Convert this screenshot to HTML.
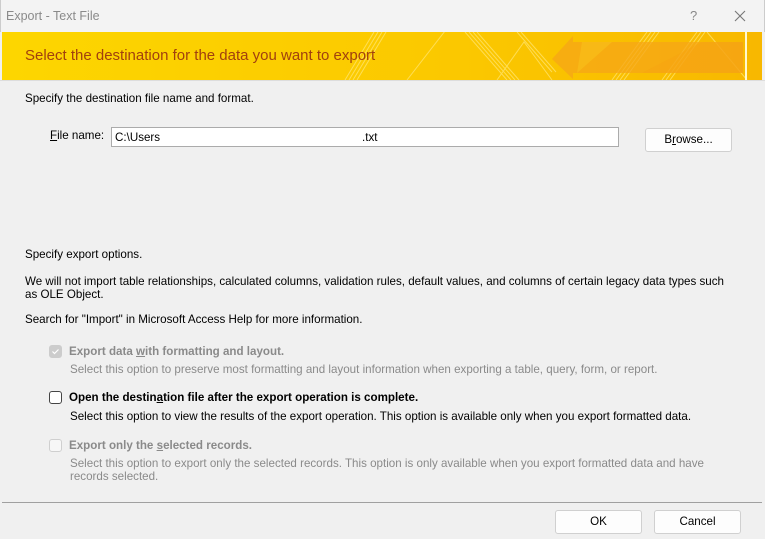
<!DOCTYPE html>
<html><head><style>
*{margin:0;padding:0;box-sizing:border-box}
body{width:765px;height:539px;background:#f0f0f0;font-family:"Liberation Sans",sans-serif;font-size:11.6px;color:#000;position:relative;overflow:hidden}
.a{position:absolute;white-space:nowrap}
.g{color:#8a8a8a}
.btn{position:absolute;background:#fdfdfd;border:1px solid #d0d0d0;border-radius:3px;text-align:center;font-size:11.6px}
.cb{position:absolute;width:13px;height:13px;border:1px solid #cfcfcf;border-radius:3px;background:#f7f7f7}
</style></head><body>
<div class="a" style="left:0;top:0;width:765px;height:32px;background:#f3f3f3;border-left:1px solid #ccc;border-right:1px solid #ccc"></div>
<div class="a" style="left:6px;top:9px;font-size:12.5px;color:#8a8a8a">Export - Text File</div>
<div class="a" style="left:690px;top:8px;font-size:13px;color:#888">?</div>
<svg class="a" style="left:734px;top:10px" width="12" height="12"><path d="M1 1L11 11M11 1L1 11" stroke="#777" stroke-width="1.1"/></svg>
<div class="a" style="left:2px;top:32px;width:760px;height:48px;background:linear-gradient(90deg,#fdd600,#fbc800 60%,#f8b800);overflow:hidden">
<svg width="760" height="48" style="position:absolute;left:0;top:0">
<g stroke="#ffe36a" stroke-width="1" fill="none" opacity=".8">
<path d="M343 48L372 0M347 48L376 0M351 48L380 0M355 48L384 0"/>
<path d="M405 48L450 -10"/>
<path d="M463 0L505 48M467 0L509 48M471 0L513 48M475 0L517 48"/>
<path d="M495 48L522 10L550 48"/>
<path d="M515 0L550 40M519 0L554 40"/>
<path d="M610 48L645 0M614 48L649 0M618 48L653 0M622 48L657 0"/>
<path d="M660 48L695 0M664 48L699 0M668 48L703 0"/>
<path d="M705 0L745 48"/>
</g>
<path d="M550 27L571 4L571 10L741 10L741 41L571 41L571 47Z" fill="#f6a517" opacity=".75"/>
<path d="M580 10L610 10L575 41L575 41Z" fill="#f9c21a" opacity=".6"/>
<path d="M640 41L700 10L741 10L741 41Z" fill="#f5a010" opacity=".35"/>
<rect x="743" y="0" width="2" height="48" fill="#fff8d0"/>
</svg>
</div>
<div class="a" style="left:25px;top:47px;font-size:15px;color:#a1400e">Select the destination for the data you want to export</div>
<div class="a" style="left:0;top:80px;width:765px;height:1px;background:#ddd"></div>
<div class="a" style="left:25px;top:92px">Specify the destination file name and format.</div>
<div class="a" style="left:50px;top:129px"><u>F</u>ile name:</div>
<div class="a" style="left:111px;top:127px;width:508px;height:20px;background:#fff;border:1px solid #ababab"></div>
<div class="a" style="left:115px;top:131px">C:\Users</div>
<div class="a" style="left:362px;top:131px">.txt</div>
<div class="btn" style="left:645px;top:128px;width:87px;height:24px;line-height:22px">B<u>r</u>owse...</div>
<div class="a" style="left:25px;top:248px">Specify export options.</div>
<div class="a" style="left:25px;top:275px;line-height:13px">We will not import table relationships, calculated columns, validation rules, default values, and columns of certain legacy data types such<br>as OLE Object.</div>
<div class="a" style="left:25px;top:313px">Search for "Import" in Microsoft Access Help for more information.</div>
<div class="cb" style="left:49px;top:345px;background:#ccc;border-color:#ccc"><svg width="11" height="11" style="position:absolute;left:0;top:0"><path d="M2.5 5.5L4.5 7.5L8.5 3.5" stroke="#fff" stroke-width="1.2" fill="none"/></svg></div>
<div class="a g" style="left:69px;top:345px;font-weight:bold">Export data <u>w</u>ith formatting and layout.</div>
<div class="a g" style="left:70px;top:363px">Select this option to preserve most formatting and layout information when exporting a table, query, form, or report.</div>
<div class="cb" style="left:49px;top:391px;border-color:#444;background:#fff"></div>
<div class="a" style="left:69px;top:391px;font-weight:bold">Open the destin<u>a</u>tion file after the export operation is complete.</div>
<div class="a" style="left:70px;top:410px">Select this option to view the results of the export operation. This option is available only when you export formatted data.</div>
<div class="cb" style="left:49px;top:439px"></div>
<div class="a g" style="left:69px;top:439px;font-weight:bold">Export only the <u>s</u>elected records.</div>
<div class="a g" style="left:70px;top:457px;line-height:13px">Select this option to export only the selected records. This option is only available when you export formatted data and have<br>records selected.</div>
<div class="a" style="left:2px;top:502px;width:760px;height:1px;background:#a0a0a0"></div>
<div class="btn" style="left:555px;top:510px;width:87px;height:24px;line-height:22px">OK</div>
<div class="btn" style="left:654px;top:510px;width:87px;height:24px;line-height:22px">Cancel</div>
</body></html>
